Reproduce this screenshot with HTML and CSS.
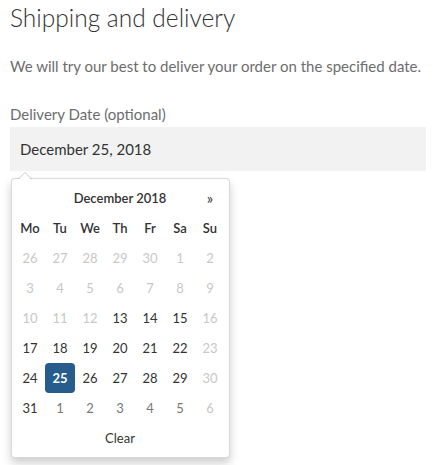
FILE: index.html
```html
<!DOCTYPE html>
<html lang="en">
<head>
<meta charset="utf-8">
<title>Shipping and delivery</title>
<link rel="stylesheet" href="styles.css">
</head>
<body>
<div class="page">
  <h3 class="title">Shipping and delivery</h3>
  <p class="intro">We will try our best to deliver your order on the specified date.</p>
  <div class="field">
    <label class="field-label">Delivery Date (optional)</label>
    <div class="input">December 25, 2018</div>
    <div class="datepicker">
      <div class="dp-grid">
        <span class="dp-prev"></span>
        <span class="dp-switch">December 2018</span>
        <span class="dp-next">»</span>
        <span class="dow">Mo</span><span class="dow">Tu</span><span class="dow">We</span><span class="dow">Th</span><span class="dow">Fr</span><span class="dow">Sa</span><span class="dow">Su</span>
        <span class="day off">26</span><span class="day off">27</span><span class="day off">28</span><span class="day off">29</span><span class="day off">30</span><span class="day off">1</span><span class="day off">2</span>
        <span class="day off">3</span><span class="day off">4</span><span class="day off">5</span><span class="day off">6</span><span class="day off">7</span><span class="day off">8</span><span class="day off">9</span>
        <span class="day off">10</span><span class="day off">11</span><span class="day off">12</span><span class="day">13</span><span class="day">14</span><span class="day">15</span><span class="day off">16</span>
        <span class="day">17</span><span class="day">18</span><span class="day">19</span><span class="day">20</span><span class="day">21</span><span class="day">22</span><span class="day off">23</span>
        <span class="day">24</span><span class="day active">25</span><span class="day">26</span><span class="day">27</span><span class="day">28</span><span class="day">29</span><span class="day off">30</span>
        <span class="day">31</span><span class="day new">1</span><span class="day new">2</span><span class="day new">3</span><span class="day new">4</span><span class="day new">5</span><span class="day off">6</span>
        <span class="dp-clear">Clear</span>
      </div>
    </div>
  </div>
</div>
</body>
</html>
```
FILE: styles.css
```css
html, body {
  margin: 0;
  padding: 0;
  background: #fff;
}
body {
  font-family: Lato, "Noto Sans", sans-serif;
  color: #6d6d6d;
  font-size: 15px;
}
.page {
  padding: 0 7px 12px 10px;
}
.title {
  margin: 0;
  font-size: 24.5px;
  font-weight: 300;
  line-height: 36px;
  color: #333;
}
.intro {
  margin: 17px 0 22px;
  line-height: 26px;
  white-space: nowrap;
}
.field-label {
  display: block;
  line-height: 26px;
}
.input {
  background: #f2f2f2;
  color: #333;
  height: 44px;
  line-height: 44px;
  padding: 0 10px;
}
.datepicker {
  position: relative;
  width: max-content;
  margin: 7px 0 0 1px;
  padding: 4px 4px 4px 3px;
  background: #fff;
  border: 1px solid rgba(0,0,0,.15);
  border-radius: 4px;
  box-shadow: 0 5px 10px rgba(0,0,0,.2);
  font-size: 13px;
  color: #333;
}
.datepicker::before {
  content: "";
  position: absolute;
  top: -7px;
  left: 6px;
  border-left: 7px solid transparent;
  border-right: 7px solid transparent;
  border-bottom: 7px solid rgba(0,0,0,.2);
}
.datepicker::after {
  content: "";
  position: absolute;
  top: -6px;
  left: 7px;
  border-left: 6px solid transparent;
  border-right: 6px solid transparent;
  border-bottom: 6px solid #fff;
}
.dp-grid {
  display: grid;
  grid-template-columns: repeat(7, 30px);
  grid-auto-rows: 30px;
  align-items: center;
  justify-items: center;
}
.dp-switch {
  grid-column: 2 / span 5;
  font-weight: 600;
}
.dp-next {
  font-size: 15px;
  line-height: 1;
}
.dow {
  font-weight: 600;
}
.day {
  width: 30px;
  height: 30px;
  line-height: 30px;
  text-align: center;
  border-radius: 4px;
  color: #333;
}
.day.off { color: #c8c8c8; }
.day.new { color: #777; }
.day.active {
  background: #275d8c;
  color: #fff;
  font-weight: 700;
}
.dp-clear {
  grid-column: 1 / span 7;
}
```
